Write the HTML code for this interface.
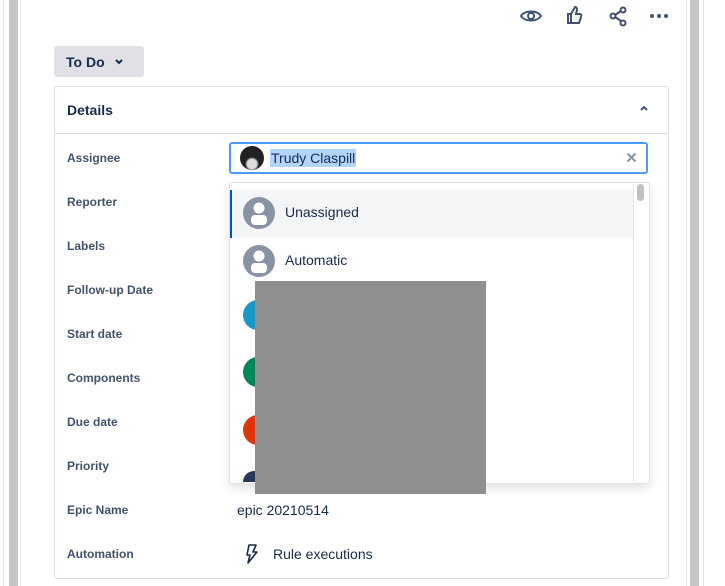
<!DOCTYPE html>
<html><head><style>
body{margin:0;width:725px;height:586px;background:#fff;position:relative;overflow:hidden;font-family:"Liberation Sans",sans-serif;color:#172b4d}
.abs{position:absolute}
.lbl{position:absolute;left:67px;font-size:12px;font-weight:bold;color:#42526e}
</style></head><body>
<div class="abs" style="left:3px;top:0;width:1px;height:586px;background:#e4e4e4"></div>
<div class="abs" style="left:9px;top:0;width:9px;height:586px;background:#c6c6c6"></div>
<div class="abs" style="left:690px;top:0;width:9px;height:586px;background:#c6c6c6"></div>
<div class="abs" style="left:20px;top:0;width:1px;height:586px;background:#e8e8e8"></div>
<div class="abs" style="left:686px;top:0;width:1px;height:586px;background:#e8e8e8"></div>
<div class="abs" style="left:703px;top:0;width:1px;height:586px;background:#e4e4e4"></div>

<svg class="abs" style="left:518px;top:4px" width="160" height="24" viewBox="0 0 160 24">
<g fill="none" stroke="#42526e" stroke-width="2">
<path d="M3 12c4-6 16-6 20 0c-4 6-16 6-20 0z"/><circle cx="13" cy="12" r="3"/>
<path d="M53 10v9h-3v-9zM53 10l4-7c2 0 2 2 2 3l-1 4h4c1 0 2 1 1 3l-2 6h-8"/>
<circle cx="105" cy="6" r="2.5"/><circle cx="105" cy="19" r="2.5"/><circle cx="95" cy="12" r="2.5"/><path d="M97 11l6-4M97 13l6 4"/>
</g>
<g fill="#42526e"><circle cx="134" cy="12" r="2"/><circle cx="141" cy="12" r="2"/><circle cx="148" cy="12" r="2"/></g>
</svg>

<div class="abs" style="left:54px;top:46px;width:90px;height:31px;background:#dfe1e6;border-radius:3px"></div>
<div class="abs" style="left:66px;top:54px;font-size:14px;font-weight:bold;color:#172b4d">To Do</div>
<svg class="abs" style="left:114px;top:57px" width="10" height="10"><path d="M2 3l3 3 3-3" fill="none" stroke="#172b4d" stroke-width="2"/></svg>

<div class="abs" style="left:54px;top:86px;width:613px;height:491px;border:1px solid #dfe1e6;border-radius:3px"></div>
<div class="abs" style="left:55px;top:133px;width:613px;height:1px;background:#dfe1e6"></div>
<div class="abs" style="left:67px;top:102px;font-size:14px;font-weight:bold">Details</div>
<svg class="abs" style="left:639px;top:104px" width="10" height="10"><path d="M2 6l3-3 3 3" fill="none" stroke="#42526e" stroke-width="2"/></svg>

<div class="lbl" style="top:151px">Assignee</div>
<div class="lbl" style="top:195px">Reporter</div>
<div class="lbl" style="top:239px">Labels</div>
<div class="lbl" style="top:283px">Follow-up Date</div>
<div class="lbl" style="top:327px">Start date</div>
<div class="lbl" style="top:371px">Components</div>
<div class="lbl" style="top:415px">Due date</div>
<div class="lbl" style="top:459px">Priority</div>
<div class="lbl" style="top:503px">Epic Name</div>
<div class="lbl" style="top:547px">Automation</div>

<div class="abs" style="left:229px;top:142px;width:415px;height:28px;border:2px solid #4c9aff;border-radius:3px;background:#fff"></div>
<div class="abs" style="left:240px;top:146px;width:24px;height:24px;border-radius:50%;background:radial-gradient(circle at 50% 75%,#ddd 0 22%,#222 32%)"></div>
<div class="abs" style="left:270px;top:149px;font-size:14px;background:#b3d4fc;padding:0 1px;line-height:18px">Trudy Claspill</div>
<svg class="abs" style="left:626px;top:152px" width="11" height="11"><path d="M1.5 1.5l8 8M9.5 1.5l-8 8" stroke="#8993a4" stroke-width="2"/></svg>

<div class="abs" style="left:229px;top:182px;width:419px;height:300px;border:1px solid #e1e1e1;border-radius:3px;background:#fff;box-shadow:0 4px 10px rgba(0,0,0,.12)"></div>
<div class="abs" style="left:633px;top:183px;width:1px;height:299px;background:#e6e6e6"></div>
<div class="abs" style="left:637px;top:184px;width:7px;height:17px;border-radius:4px;background:#c1c1c1"></div>
<div class="abs" style="left:230px;top:190px;width:403px;height:48px;background:#f4f5f7"></div>
<div class="abs" style="left:230px;top:190px;width:2px;height:48px;background:#0052cc"></div>
<svg class="abs" style="left:243px;top:197px" width="33" height="90">
<g><circle cx="16" cy="16" r="16" fill="#8993a4"/><circle cx="16" cy="11" r="5.5" fill="#fff"/><rect x="8" y="18" width="16" height="10" rx="4" fill="#fff"/></g>
<g transform="translate(0,48)"><circle cx="16" cy="16" r="16" fill="#8993a4"/><circle cx="16" cy="11" r="5.5" fill="#fff"/><rect x="8" y="18" width="16" height="10" rx="4" fill="#fff"/></g>
</svg>
<div class="abs" style="left:285px;top:204px;font-size:14px">Unassigned</div>
<div class="abs" style="left:285px;top:252px;font-size:14px">Automatic</div>
<div class="abs" style="left:243px;top:300px;width:30px;height:30px;border-radius:50%;background:#1798c9"></div>
<div class="abs" style="left:243px;top:357px;width:30px;height:30px;border-radius:50%;background:#00875a"></div>
<div class="abs" style="left:243px;top:415px;width:30px;height:30px;border-radius:50%;background:#de350b"></div>
<div class="abs" style="left:243px;top:471px;width:30px;height:11px;border-radius:15px 15px 0 0;background:#253858"></div>
<div class="abs" style="left:255px;top:281px;width:231px;height:213px;background:#8f8f8f"></div>

<div class="abs" style="left:237px;top:502px;font-size:14px">epic 20210514</div>
<svg class="abs" style="left:244px;top:544px" width="14" height="20"><path d="M5 1h7l-3 7h4l-9 11 2-8H3z" fill="none" stroke="#172b4d" stroke-width="1.6" stroke-linejoin="round"/></svg>
<div class="abs" style="left:273px;top:546px;font-size:14px">Rule executions</div>
</body></html>
